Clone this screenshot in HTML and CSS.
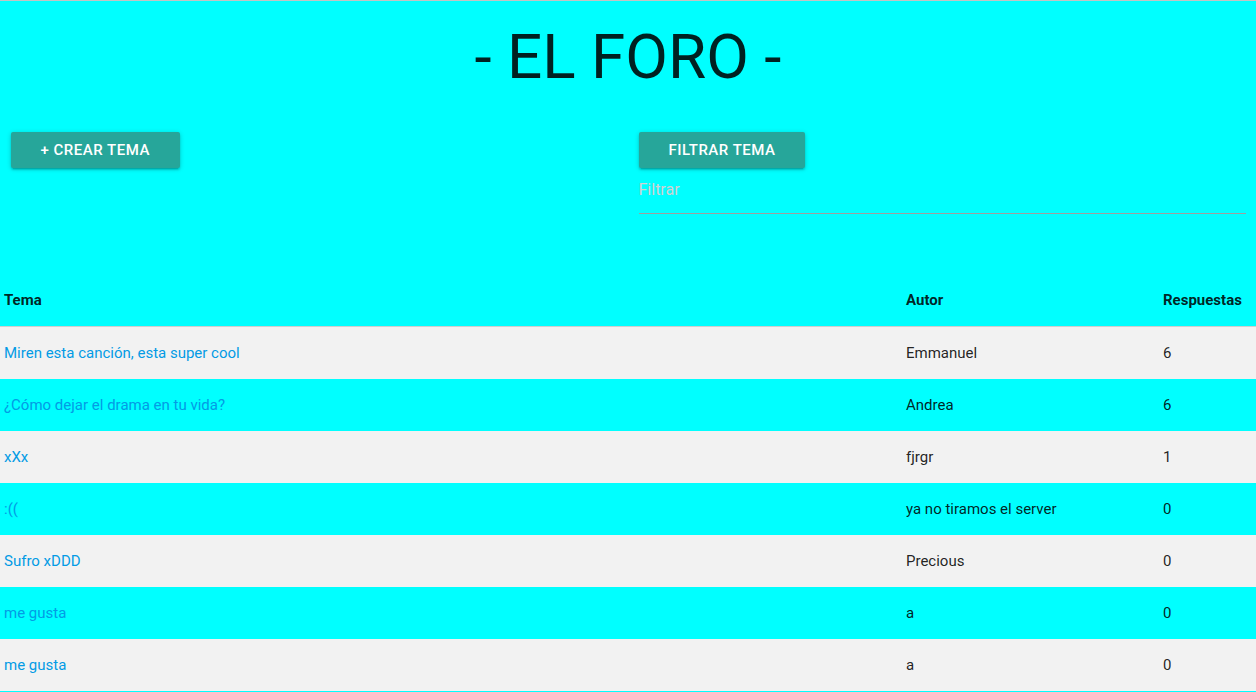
FILE: index.html
```html
<!DOCTYPE html>
<html lang="es">
<head>
<meta charset="utf-8">
<title>El Foro</title>
<link rel="stylesheet" href="styles.css">
</head>
<body>
<header class="title-wrap">
  <h1 class="title">- EL FORO -</h1>
</header>
<section class="controls">
  <div class="col">
    <button class="btn">+ Crear tema</button>
  </div>
  <div class="col">
    <button class="btn">Filtrar tema</button>
    <div class="input-field">
      <input type="text" class="filter-input" placeholder="Filtrar">
    </div>
  </div>
</section>
<table class="topics">
  <colgroup>
    <col class="c-tema">
    <col class="c-autor">
    <col class="c-resp">
  </colgroup>
  <thead>
    <tr><th>Tema</th><th>Autor</th><th>Respuestas</th></tr>
  </thead>
  <tbody>
    <tr><td><a href="#">Miren esta canción, esta super cool</a></td><td>Emmanuel</td><td>6</td></tr>
    <tr><td><a href="#">¿Cómo dejar el drama en tu vida?</a></td><td>Andrea</td><td>6</td></tr>
    <tr><td><a href="#">xXx</a></td><td>fjrgr</td><td>1</td></tr>
    <tr><td><a href="#">:((</a></td><td>ya no tiramos el server</td><td>0</td></tr>
    <tr><td><a href="#">Sufro xDDD</a></td><td>Precious</td><td>0</td></tr>
    <tr><td><a href="#">me gusta</a></td><td>a</td><td>0</td></tr>
    <tr><td><a href="#">me gusta</a></td><td>a</td><td>0</td></tr>
  </tbody>
</table>
</body>
</html>
```
FILE: styles.css
```css
html {
  font-size: 15px;
}
body {
  margin: 0;
  background: #00ffff;
  border-top: 1px solid #c4c4c4;
  font-family: Roboto, "Liberation Sans", sans-serif;
  color: rgba(0, 0, 0, 0.87);
  line-height: 1.5;
}
.title-wrap {
  padding-top: 21px;
  height: 70px;
}
.title {
  margin: 0;
  text-align: center;
  font-size: 62px;
  font-weight: 400;
  line-height: 70px;
}
.controls {
  display: grid;
  grid-template-columns: 1fr 1fr;
  margin-top: 40px;
  height: 142px;
}
.col {
  padding: 0 10.5px;
}
.btn {
  display: block;
  height: 36px;
  line-height: 36px;
  padding: 0 30px;
  border: none;
  border-radius: 2px;
  background: #26a69a;
  color: #fff;
  font-family: Roboto, "Liberation Sans", sans-serif;
  font-size: 15px;
  font-weight: 500;
  letter-spacing: 0.5px;
  text-transform: uppercase;
  box-shadow: 0 2px 2px 0 rgba(0,0,0,0.14), 0 3px 1px -2px rgba(0,0,0,0.12), 0 1px 5px 0 rgba(0,0,0,0.2);
  cursor: pointer;
}
.input-field {
  margin-top: 1px;
}
.filter-input {
  display: block;
  box-sizing: content-box;
  width: 100%;
  height: 41px;
  padding: 0 0 3px 0;
  margin: 0;
  border: none;
  border-bottom: 1px solid #9e9e9e;
  background: transparent;
  outline: none;
  font-family: Roboto, "Liberation Sans", sans-serif;
  font-size: 16px;
  color: rgba(0,0,0,0.87);
}
.filter-input::placeholder {
  color: #d1d1d1;
}
.topics {
  width: 100%;
  border-collapse: collapse;
  font-size: 15px;
}
.c-tema { width: 901px; }
.c-autor { width: 257px; }
.c-resp { width: 98px; }
.topics th,
.topics td {
  padding: 15px 5px;
  height: 22px;
  line-height: 22px;
  text-align: left;
  vertical-align: middle;
}
.topics th:first-child,
.topics td:first-child {
  padding-left: 4px;
}
.topics th {
  font-weight: 700;
}
.topics thead tr {
  border-bottom: 1px solid #d0d0d0;
}
.topics tbody tr:nth-child(odd) {
  background: #f2f2f2;
}
.topics a {
  color: #039be5;
  text-decoration: none;
}
```
